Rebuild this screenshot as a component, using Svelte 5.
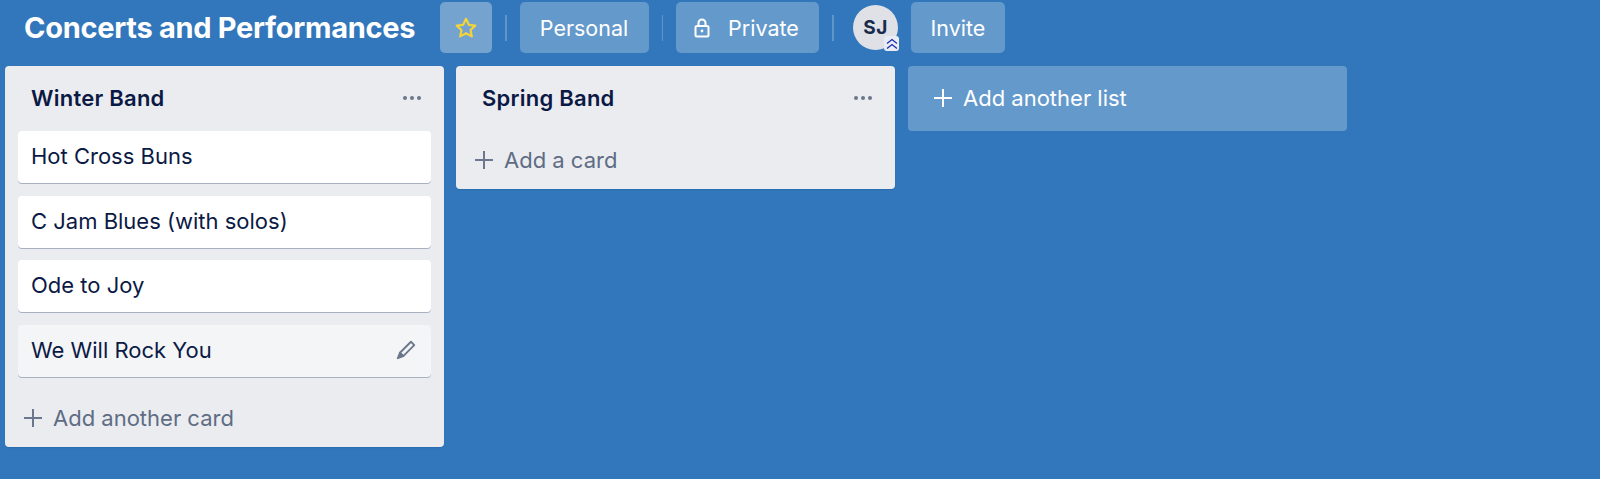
<script>
	const lists = [
		{
			title: "Winter Band",
			cards: ["Hot Cross Buns", "C Jam Blues (with solos)", "Ode to Joy", "We Will Rock You"],
			add: "Add another card",
		},
		{ title: "Spring Band", cards: [], add: "Add a card" },
	];
</script>

<div class="board">
	<header class="boardHeader">
		<h1 class="boardTitle">Concerts and Performances</h1>
		<button class="headerBtn starBtn" aria-label="Star">
			<svg width="24" height="24" viewBox="0 0 24 24" fill="none" stroke="#f2d43a" stroke-width="2.2" stroke-linejoin="round">
				<path d="M12 2.800l2.800 6 6.500.8-4.800 4.400 1.300 6.400L12 17.200l-5.800 3.200 1.300-6.400L2.700 9.600l6.500-.8z" />
			</svg>
		</button>
		<span class="sep"></span>
		<button class="headerBtn personal">Personal</button>
		<span class="sep"></span>
		<button class="headerBtn private">
			<svg width="18" height="20" viewBox="0 0 18 20" fill="none" stroke="#fff" stroke-width="2">
				<rect x="2.500" y="8" width="13" height="10.500" rx="1.500" />
				<path d="M5.500 8V5a3.500 3.500 0 0 1 7 0v3" />
				<circle cx="9" cy="13" r="1.400" fill="#fff" stroke="none" />
			</svg>
			Private
		</button>
		<span class="sep"></span>
		<div class="avatar">
			SJ
			<span class="adminBadge">
				<svg width="14" height="14" viewBox="0 0 14 14" fill="none" stroke="#1c2bb0" stroke-width="1.300">
					<path d="M2 6.500L7 2.500l5 4M2 11.500L7 7.500l5 4" />
				</svg>
			</span>
		</div>
		<button class="headerBtn invite">Invite</button>
	</header>

	<div class="lists">
		{#each lists as list}
			<section class="list">
				<div class="listHeader">
					<h2>{list.title}</h2>
					<span class="dots"><i></i><i></i><i></i></span>
				</div>
				{#each list.cards as card, i}
					<div class="card" class:hovered={i === 3}>
						{card}
						{#if i === 3}
							<svg class="pencil" width="22" height="22" viewBox="0 0 20 20" fill="none" stroke="#6b778c" stroke-width="1.700" stroke-linejoin="round">
								<path d="M14.500 2.500l3 3L7.500 15.500l-3-3z" />
								<path d="M4.500 12.500l-2 5 5-2z" fill="#6b778c" />
							</svg>
						{/if}
					</div>
				{/each}
				<div class="addCard">
					<svg width="20" height="20" viewBox="0 0 20 20" stroke="#6b778c" stroke-width="2">
						<path d="M10 1v18M1 10h18" />
					</svg>
					{list.add}
				</div>
			</section>
		{/each}
		<div class="addList">
			<svg width="20" height="20" viewBox="0 0 20 20" stroke="#fff" stroke-width="2">
				<path d="M10 1v18M1 10h18" />
			</svg>
			Add another list
		</div>
	</div>
</div>

<style>
	:global(body) {
		margin: 0;
		background-color: #3277bb;
	}

	.board {
		height: 479px;
		overflow: hidden;
		font-family: Inter, "Noto Sans", sans-serif;
		font-size: 22px;
	}

	.boardHeader {
		display: flex;
		align-items: center;
		height: 51px;
		padding: 2px 0 0 24px;
	}

	.boardTitle {
		margin: 0 25px 0 0;
		width: 391px;
		font-size: 29px;
		font-weight: 700;
		letter-spacing: -0.29px;
		color: #fff;
		white-space: nowrap;
	}

	.headerBtn {
		display: flex;
		align-items: center;
		justify-content: center;
		height: 51px;
		padding: 0;
		border: none;
		border-radius: 5px;
		background-color: #6499cc;
		color: #fff;
		font-family: inherit;
		font-size: 21.500px;
	}

	.starBtn {
		width: 52px;
		background-color: #75a3d0;
	}

	.personal {
		width: 129px;
	}

	.private {
		width: 143px;
		gap: 17px;
		padding-right: 3px;
	}

	.invite {
		width: 94px;
	}

	.sep {
		width: 1.500px;
		height: 26px;
		margin: 0 13px;
		background-color: #5f95c9;
	}

	.avatar {
		position: relative;
		display: flex;
		align-items: center;
		justify-content: center;
		width: 45px;
		height: 45px;
		margin: 0 13px 0 6.500px;
		border-radius: 50%;
		background-color: #dfe1e6;
		color: #172b4d;
		font-size: 19px;
		font-weight: 700;
		letter-spacing: 0.5px;
	}

	.adminBadge {
		position: absolute;
		right: -1px;
		bottom: -1px;
		display: flex;
		width: 15px;
		height: 15px;
		align-items: center;
		justify-content: center;
		border-radius: 3px;
		background-color: #e9ecf4;
	}

	.lists {
		display: flex;
		align-items: flex-start;
		gap: 12px;
		padding: 13px 0 0 5px;
	}

	.list {
		width: 439px;
		box-sizing: border-box;
		padding: 0 13px;
		border-radius: 4px;
		background-color: #ebecf0;
		color: #0b1a44;
		box-shadow: 0 1px 1px #2a6cb0;
	}

	.listHeader {
		display: flex;
		align-items: center;
		justify-content: space-between;
		box-sizing: border-box;
		height: 65px;
		padding: 0 9px 2px 13px;
	}

	.listHeader h2 {
		margin: 0;
		font-size: 22px;
		font-weight: 600;
		letter-spacing: 0.25px;
	}

	.dots {
		display: flex;
		gap: 3px;
		margin-right: 1px;
	}

	.dots i {
		width: 4px;
		height: 4px;
		border-radius: 50%;
		background-color: #6b778c;
	}

	.card {
		display: flex;
		align-items: center;
		justify-content: space-between;
		box-sizing: border-box;
		height: 52px;
		margin-bottom: 12.500px;
		padding: 0 14px 2px 13px;
		border-radius: 4px;
		background-color: #fff;
		box-shadow: 0 1px 0 #a9b1c0;
	}

	.hovered {
		background-color: #f4f5f7;
	}

	.addCard {
		display: flex;
		align-items: center;
		gap: 10px;
		box-sizing: border-box;
		height: 58px;
		padding-bottom: 1px;
		color: #5e6c84;
		margin-left: 5px;
	}

	.addList {
		display: flex;
		align-items: center;
		gap: 10px;
		width: 439px;
		height: 65px;
		box-sizing: border-box;
		margin-left: 1px;
		padding: 0 0 2px 25px;
		border-radius: 4px;
		background-color: #6499cc;
		color: #fff;
	}
</style>
